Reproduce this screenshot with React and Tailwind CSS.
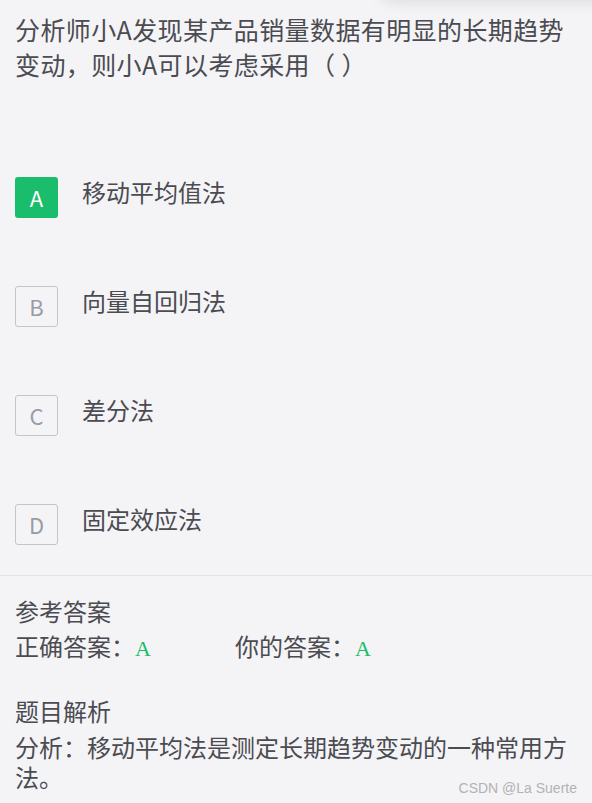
export default function App() {
  const options = [
    { k: "A", t: "移动平均值法", on: true },
    { k: "B", t: "向量自回归法" },
    { k: "C", t: "差分法" },
    { k: "D", t: "固定效应法" },
  ];
  return (
    <div className="relative w-[592px] h-[803px] overflow-hidden bg-[#f4f4f6] text-[#4b4b52] font-['Noto_Sans_CJK_SC','Noto_Sans',sans-serif]">
      <div className="absolute left-[380px] top-[-44px] w-[280px] h-[44px] rounded-[12px] bg-[#f4f4f6] shadow-[0_2px_14px_rgba(0,0,0,0.10)]" />
      <div className="px-[15px] pt-[12px] text-[25px] leading-[35px] tracking-[0.4px]">
        分析师小A发现某产品销量数据有明显的长期趋势
        <br />
        变动，则小A可以考虑采用（ ）
      </div>
      <div className="mt-[95px] flex flex-col gap-[68px] px-[15px]">
        {options.map((o) => (
          <div key={o.k} className="flex items-start h-[41px]">
            <div
              className={
                o.on
                  ? "w-[43px] h-[41px] rounded-[3px] bg-[#1abd6c] text-white flex items-center justify-center text-[22px]"
                  : "w-[43px] h-[41px] rounded-[3px] border border-[#c3c5cb] text-[#9a9ca3] flex items-center justify-center text-[22px]"
              }
            >
              {o.k}
            </div>
            <div className="ml-[24px] -mt-[3px] text-[24px] leading-[36px]">{o.t}</div>
          </div>
        ))}
      </div>
      <div className="mt-[30px] h-px bg-[#e2e2e8]" />
      <div className="px-[15px] pt-[20px] text-[24px] leading-[30px]">
        <div>参考答案</div>
        <div className="mt-[5px] flex">
          <div className="w-[220px]">
            正确答案：<span className="font-['Liberation_Serif',serif] text-[22px] text-[#1abd6c]">A</span>
          </div>
          <div>
            你的答案：<span className="font-['Liberation_Serif',serif] text-[22px] text-[#1abd6c]">A</span>
          </div>
        </div>
        <div className="mt-[32px]">题目解析</div>
        <div className="mt-[6px]">
          分析：移动平均法是测定长期趋势变动的一种常用方
          <br />
          法。
        </div>
      </div>
      <div className="absolute right-[15px] bottom-[6px] text-[14px] leading-[18px] text-[#b2b2b6] font-['Liberation_Sans',sans-serif]">
        CSDN @La Suerte
      </div>
    </div>
  );
}
